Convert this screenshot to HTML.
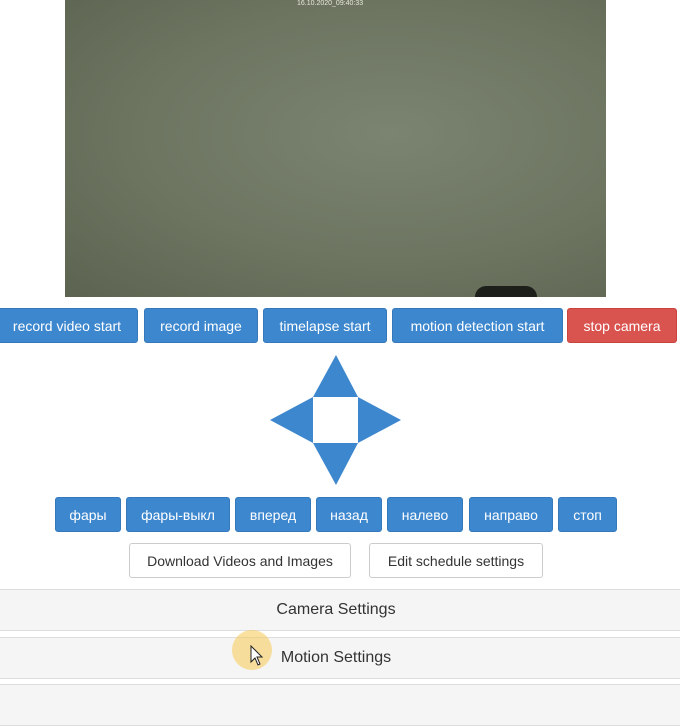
<!DOCTYPE html>
<html><head><meta charset="utf-8"><style>
body{margin:0;width:680px;height:694px;background:#fff;position:relative;overflow:hidden;font-family:"Liberation Sans",sans-serif;}
.cam{position:absolute;left:65px;top:0;width:541px;height:297px;background:radial-gradient(ellipse at 60% 45%,#7a8470 0%,#6d7561 55%,#5c6350 100%);}
.cam .ts{position:absolute;left:232px;top:0;font-size:7px;color:#e8e8d8;}
.cam .blob{position:absolute;left:410px;bottom:0;width:62px;height:11px;border-radius:31px 31px 0 0;background:#1d1f1a;}
.b{position:absolute;height:35px;line-height:35px;text-align:center;color:#fff;font-size:14px;border-radius:3px;background:#3d87cf;border:1px solid #3579bb;box-sizing:border-box;}
.r{background:#d9534f;border-color:#c9443f;}
.w{background:#fff;color:#333;border:1px solid #ccc;}
.p{position:absolute;left:0;width:680px;height:42px;background:#f5f5f5;border-top:1px solid #ddd;border-bottom:1px solid #ddd;box-sizing:border-box;text-align:center;line-height:40px;font-size:16px;color:#333;}
</style></head><body>
<div class="cam"><span class="ts">16.10.2020_09:40:33</span><div class="blob"></div></div>
<div class="b" style="left:-4px;top:308px;width:142px">record video start</div>
<div class="b" style="left:144px;top:308px;width:114px">record image</div>
<div class="b" style="left:263px;top:308px;width:124px">timelapse start</div>
<div class="b" style="left:392px;top:308px;width:171px">motion detection start</div>
<div class="b r" style="left:567px;top:308px;width:110px">stop camera</div>
<svg style="position:absolute;left:0;top:0" width="680" height="694">
<g fill="#3d87cf">
<polygon points="336,355 358,397 313,397"/>
<polygon points="270,420 313,397 313,443"/>
<polygon points="401,420 358,397 358,443"/>
<polygon points="336,485 313,443 358,443"/>
</g></svg>
<div class="b" style="left:55px;top:497px;width:66px">фары</div>
<div class="b" style="left:126px;top:497px;width:104px">фары-выкл</div>
<div class="b" style="left:235px;top:497px;width:76px">вперед</div>
<div class="b" style="left:316px;top:497px;width:66px">назад</div>
<div class="b" style="left:387px;top:497px;width:76px">налево</div>
<div class="b" style="left:469px;top:497px;width:84px">направо</div>
<div class="b" style="left:558px;top:497px;width:59px">стоп</div>
<div class="b w" style="left:129px;top:543px;width:222px">Download Videos and Images</div>
<div class="b w" style="left:369px;top:543px;width:174px">Edit schedule settings</div>
<div class="p" style="top:589px;padding-right:8px">Camera Settings</div>
<div class="p" style="top:637px;padding-right:8px">Motion Settings</div>
<div class="p" style="top:684px"></div>
<div style="position:absolute;left:232px;top:630px;width:40px;height:40px;border-radius:50%;background:rgba(245,200,80,0.55)"></div>
<svg style="position:absolute;left:250px;top:645px" width="14" height="22"><polygon points="1,1 1,17 5,13 8,20 10,19 7,12 12,12" fill="#fff" stroke="#222" stroke-width="1"/></svg>
</body></html>
